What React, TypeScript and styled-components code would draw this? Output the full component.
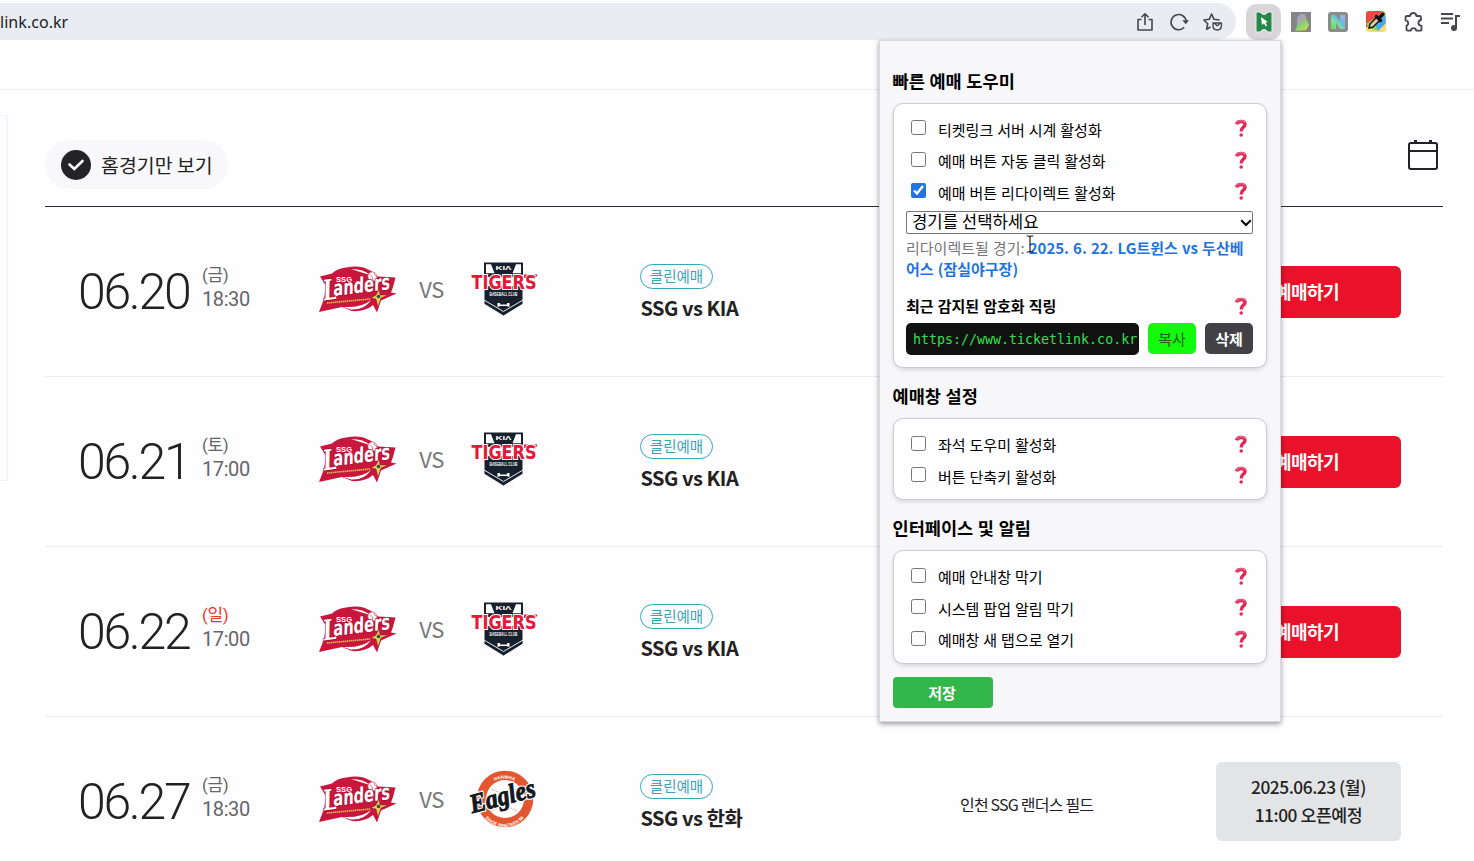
import React from "react"
import styled, { createGlobalStyle } from "styled-components"

const GlobalStyle = createGlobalStyle`
  * {
    box-sizing: border-box;
  }
  body {
    margin: 0;
    overflow: hidden;
    background: #fefdff;
    color: #222;
    font-family: "Noto Sans CJK KR", "Noto Sans", sans-serif;
  }
`
const Page = styled.div`
  position: relative;
  width: 1474px;
  height: 861px;
  overflow: hidden;
`
const BrowserBar = styled.header`
  display: flex;
  align-items: center;
  height: 41px;
  padding: 3px 0 1px;
`
const AddressBar = styled.div`
  display: flex;
  align-items: center;
  width: 1236px;
  height: 37px;
  padding-right: 13px;
  border-radius: 0 19px 19px 0;
  background: #e9edf3;
`
const Url = styled.span`
  flex: 1;
  font: 16px/22px "Noto Sans", sans-serif;
  letter-spacing: 0.05px;
  color: #202124;
`
const AddressIcons = styled.div`
  display: flex;
  gap: 14px;
`
const Extensions = styled.div`
  display: flex;
  align-items: center;
  gap: 17px;
  padding-left: 10px;
`
const ActiveExtension = styled.div`
  display: flex;
  align-items: center;
  justify-content: center;
  width: 35px;
  height: 36px;
  margin-right: -7px;
  border-radius: 10px;
  background: #d8d6d9;
`
const NavStrip = styled.div`
  height: 49px;
  border-bottom: 1px solid #efeef1;
`
const Body = styled.div`
  display: flex;
  align-items: flex-start;
`
const SidePanel = styled.aside`
  width: 8px;
  height: 366px;
  margin-top: 25px;
  border: 1px solid #f3f2f6;
  border-left: 0;
`
const Main = styled.main`
  width: 1398px;
  margin-left: 37px;
`
const Toolbar = styled.div`
  display: flex;
  justify-content: space-between;
  align-items: flex-start;
  height: 117px;
  padding: 50px 4px 0 0;
  border-bottom: 1px solid #2b2a2e;
`
const HomeFilter = styled.div`
  display: flex;
  align-items: center;
  gap: 10px;
  width: 183px;
  height: 49px;
  padding-left: 16px;
  border-radius: 25px;
  background: #f8f7fa;
  font-size: 19.4px;
  letter-spacing: 0.05px;
  white-space: nowrap;
`
const GameRow = styled.section`
  display: flex;
  align-items: center;
  height: 170px;
  padding: 0 42px 0 33px;
  border-bottom: 1px solid #ecebee;
`
const GameDate = styled.div`
  width: 124px;
  font: 300 50px/56px Roboto, sans-serif;
  letter-spacing: -2.3px;
  color: #222;
`
const GameTime = styled.div`
  width: 116px;
  padding-bottom: 8px;
  font: 20px/24px Roboto, "Noto Sans CJK KR", sans-serif;
  letter-spacing: -0.4px;
  color: #666;
`
const DayName = styled.div<{ $holiday?: boolean }>`
  font-size: 17px;
  line-height: 23px;
  color: ${(props) => (props.$holiday ? "#e8392f" : "#666")};
`
const Versus = styled.span`
  width: 72px;
  padding: 0 5px 7px 0;
  text-align: center;
  font: 22px/30px "Noto Sans CJK KR", sans-serif;
  letter-spacing: -0.4px;
  color: #777;
`
const TeamLogo = styled.svg<{ $width: number }>`
  flex: none;
  width: ${(props) => props.$width}px;
  height: 60px;
  overflow: visible;
`
const Match = styled.div`
  width: 320px;
  margin-left: 101px;
  padding-top: 2px;
`
const CleanBadge = styled.span`
  display: block;
  width: 73px;
  height: 25px;
  border: 1px solid #35a7b9;
  border-radius: 13px;
  text-align: center;
  font-size: 14.5px;
  line-height: 22px;
  color: #3ba3b4;
`
const MatchName = styled.div`
  margin-top: 5px;
  padding-left: 0.5px;
  font-size: 20px;
  font-weight: 700;
  line-height: 28px;
  letter-spacing: -0.48px;
`
const Stadium = styled.div`
  flex: 1;
  padding-top: 5px;
  font-size: 16px;
  letter-spacing: -0.8px;
`
const ReserveButton = styled.button`
  width: 185px;
  height: 52px;
  padding: 0 3px 2px 0;
  border: 0;
  border-radius: 6px;
  background: #e9122a;
  font: 700 18px/26px "Noto Sans CJK KR", sans-serif;
  letter-spacing: -0.6px;
  color: #fff;
`
const OpenNotice = styled.div`
  display: flex;
  align-items: center;
  justify-content: center;
  width: 185px;
  height: 79px;
  padding-bottom: 2px;
  border-radius: 6px;
  background: #e2e4e6;
  text-align: center;
  font-size: 17.3px;
  font-weight: 500;
  line-height: 28px;
  letter-spacing: -0.45px;
`

const Popup = styled.div`
  position: absolute;
  top: 40px;
  left: 879px;
  width: 402px;
  height: 682px;
  padding: 26px 13px 0;
  border: 1px solid #dad9dc;
  background: #f7f6f9;
  box-shadow: 0 2px 5px rgba(0, 0, 0, 0.4);
  font-size: 15px;
  color: #000;
`
const SectionTitle = styled.h3`
  margin: 0 0 9px -0.5px;
  font-size: 17.55px;
  font-weight: 700;
  line-height: 27px;
  word-spacing: 0.7px;
`
const Card = styled.div<{ $gap?: number }>`
  margin-bottom: ${(props) => props.$gap ?? 14}px;
  padding: 8px 13px 9px 12px;
  border: 1px solid #cccbd0;
  border-radius: 10px;
  background: #fefdff;
  box-shadow: 0 2px 4px rgba(0, 0, 0, 0.12);
`
const OptionRow = styled.label`
  display: flex;
  align-items: center;
  height: 31.6px;
  padding-right: 4px;
`
const Checkbox = styled.input`
  width: 15px;
  height: 15px;
  margin: 0 12px 0 5px;
  accent-color: #2374e1;
`
const OptionText = styled.span`
  flex: 1;
  padding-top: 4px;
  line-height: 22px;
  word-spacing: 0.6px;
`
const SelectWrap = styled.div`
  position: relative;
  height: 23px;
  margin-top: 4px;
`
const GameSelect = styled.select`
  display: block;
  appearance: none;
  width: 347px;
  height: 23px;
  padding: 0 0 2px 5px;
  border: 1px solid #767676;
  border-radius: 2px;
  background: #fefdff;
  font: 16.7px/19px "Noto Sans CJK KR", sans-serif;
  color: #000;
`
const SelectArrow = styled.svg`
  position: absolute;
  top: 8px;
  right: 1px;
`
const RedirectInfo = styled.p`
  margin: 3px 0 15px;
  line-height: 21px;
  word-spacing: 0.7px;
  color: #777;
  word-break: break-all;
`
const RedirectTarget = styled.b`
  color: #1f74dc;
`
const LinkHeader = styled.div`
  display: flex;
  align-items: center;
  justify-content: space-between;
  height: 24px;
  padding-right: 4px;
  font-weight: 700;
  word-spacing: 0.7px;
`
const LinkRow = styled.div`
  display: flex;
  gap: 9px;
  margin: 5px 0 3.5px;
`
const LinkField = styled.div`
  flex: 1;
  height: 32px;
  padding-left: 7px;
  border-radius: 5px;
  overflow: hidden;
  background: #111;
  font: 13.3px/33px "DejaVu Sans Mono", monospace;
  color: #2fe04a;
`
const SmallButton = styled.button<{ $bg: string; $color: string; $bold?: boolean }>`
  flex: none;
  width: 48px;
  height: 31px;
  padding: 2px 0 0;
  border: 0;
  border-radius: 5px;
  background: ${(props) => props.$bg};
  font: ${(props) => (props.$bold ? 700 : 400)} 15px/22px "Noto Sans CJK KR", sans-serif;
  color: ${(props) => props.$color};
`
const SaveButton = styled.button`
  display: block;
  width: 100px;
  height: 31px;
  padding: 1px 2px 0 0;
  border: 0;
  border-radius: 4px;
  background: #33b74a;
  font: 700 15px/22px "Noto Sans CJK KR", sans-serif;
  color: #fff;
`
const TextCursor = styled.svg`
  position: absolute;
  top: 235px;
  left: 1025px;
`

interface Game {
  date: string
  day: string
  time: string
  opponent: string
  holiday?: boolean
  stadium?: string
  opensAt?: string[]
}

const games: Game[] = [
  { date: "06.20", day: "금", time: "18:30", opponent: "KIA" },
  { date: "06.21", day: "토", time: "17:00", opponent: "KIA" },
  { date: "06.22", day: "일", time: "17:00", opponent: "KIA", holiday: true },
  {
    date: "06.27",
    day: "금",
    time: "18:30",
    opponent: "한화",
    stadium: "인천 SSG 랜더스 필드",
    opensAt: ["2025.06.23 (월)", "11:00 오픈예정"],
  },
]

const LandersLogo = () => (
  <TeamLogo $width={80} viewBox="0 0 80 60">
    <path
      d="M2 14.5 L14 11.5 Q19 6.5 28 5.5 Q42 2.5 50 7.5 Q57 10.5 60 14.5 L77.5 15.5 L75 25 L73 30.5 L78.5 31.5 L63 38.5 L59 50.5 L55 43 Q47 50 34 49 L24 45 L1 50 L6 37 L8 24Z"
      fill="#c9163c"
    />
    <path d="M33 7 Q46 7 52 13 Q42 10 33 7Z M25 45 Q44 46 53 38 Q47 48 33 47.5Z" fill="#fff" />
    <circle cx="54.5" cy="14.5" r="4.5" fill="#fff" stroke="#d7828e" strokeWidth=".7" />
    <path d="M52 12.5q3 2 3 6M56 10.5q0 3 3 4" fill="none" stroke="#c9163c" strokeWidth=".6" />
    <text x="18" y="20" fill="#fff" fontFamily="Liberation Sans" fontWeight="700" fontSize="7.5" textLength="16">
      SSG
    </text>
    <g
      transform="rotate(-7 8 37) skewX(-8)"
      fill="#fff"
      stroke="#a10f33"
      strokeWidth="1.4"
      paintOrder="stroke"
      fontWeight="700"
    >
      <text x="10" y="38" fontFamily="DejaVu Serif" fontSize="28" textLength="14" lengthAdjust="spacingAndGlyphs">
        L
      </text>
      <text x="20.5" y="35" fontFamily="DejaVu Sans" fontSize="21" textLength="57" lengthAdjust="spacingAndGlyphs">
        anders
      </text>
    </g>
    <path d="M9 41 L52 37" stroke="#e3b44d" strokeWidth="1.6" strokeDasharray="1.5 .5" />
    <path d="M61 27 L62 33 L70 33 L63 36 L60 45 L58 37 L53 36 L58 33Z" fill="#e9cf5b" stroke="#8c1733" strokeWidth=".5" />
    <circle cx="60.5" cy="34.5" r="1.8" fill="#26583c" />
  </TeamLogo>
)

const TigersLogo = () => (
  <TeamLogo $width={69} viewBox="0 0 69 60">
    <path d="M14 .4 H53 V15 H14Z" fill="#17212d" />
    <path d="M16 2.2 h5 l3.5 9 h-8.5z M51 2.2 h-5 l-3.5 9 h8.5z" fill="#fff" />
    <path d="M14.5 24 H52.5 V40 L33.5 51 L14.5 40Z" fill="#17212d" />
    <path d="M14 38 L33.5 49.5 L53 38 V42 L33.5 54 L14 42Z" fill="#17212d" stroke="#fff" strokeWidth=".9" />
    <path d="M27.5 45 v-4 h2.5 v1.5 h7 v-1.5 h2.5 v4 l-3 -1 h-6z" fill="#fff" />
    <text x="25.5" y="8" fill="#fff" fontFamily="Liberation Sans" fontWeight="700" fontSize="5.5" textLength="16" lengthAdjust="spacingAndGlyphs">
      KIΛ
    </text>
    {/* wide serifs on the outer ends of the wordmark */}
    <path d="M.2 12.6 H16 V16 H2.4Z M67.6 12.6 H54 V16 H65.6Z" fill="#e31937" />
    <text
      x="1.5"
      y="26.6"
      fill="#e31937"
      stroke="#fff"
      strokeWidth="2.2"
      paintOrder="stroke"
      fontFamily="DejaVu Sans"
      fontWeight="700"
      fontSize="19"
      textLength="65"
      lengthAdjust="spacingAndGlyphs"
    >
      TIGERS
    </text>
    <text x="19.5" y="33.5" fill="#fff" fontFamily="Liberation Sans" fontWeight="700" fontSize="4.5" textLength="28" lengthAdjust="spacingAndGlyphs">
      BASEBALL CLUB
    </text>
  </TeamLogo>
)

const EaglesLogo = () => (
  <TeamLogo $width={69} viewBox="0.5 3 69 60">
    <circle cx="35.5" cy="30" r="28.3" fill="#e2572f" />
    <circle cx="35.5" cy="30" r="19" fill="#fff" />
    <path d="M22 20 Q34 27 48 20 M22 42 Q34 34 48 42" fill="none" stroke="#efb49b" strokeWidth="1.4" strokeDasharray="1.5 1" />
    <path id="eaglesTop" d="M14 25 A22 22 0 0 1 56 25" fill="none" />
    <path id="eaglesBottom" d="M10 33 A25 25 0 0 0 60 33" fill="none" />
    <g fill="#fff" fontFamily="Liberation Sans" fontWeight="700" fontSize="4.5">
      <text>
        <textPath href="#eaglesTop" startOffset="50%" textAnchor="middle">
          HANWHA
        </textPath>
      </text>
      <text>
        <textPath href="#eaglesBottom" startOffset="50%" textAnchor="middle">
          SINCE NINETEEN 86
        </textPath>
      </text>
    </g>
    <g transform="rotate(-15 4 45)" fontFamily="Liberation Serif" fontStyle="italic" fontWeight="700" fontSize="27">
      <text x="3" y="44" fill="#fff" stroke="#fff" strokeWidth="3.2" textLength="67" lengthAdjust="spacingAndGlyphs" aria-hidden="true">
        Eagles
      </text>
      <text x="3" y="44" fill="#111820" stroke="#111820" strokeWidth=".9" textLength="67" lengthAdjust="spacingAndGlyphs">
        Eagles
      </text>
    </g>
  </TeamLogo>
)

const HelpMark = () => (
  <svg width="15" height="19" viewBox="0 -1 15 19">
    <path d="M2.6 5.4 Q3.2 2.5 7 2.5 Q11 2.5 11 5.5 Q11 7.3 8.8 8.6 Q7.3 9.6 7.3 12.4" fill="none" stroke="#dc2b55" strokeWidth="3.5" />
    <path d="M2.5 4.4 Q3.6 1.6 7.2 1.6 Q10.4 1.6 11.2 4" fill="none" stroke="#f0668a" strokeWidth="1.1" />
    <circle cx="7.2" cy="16" r="1.8" fill="#dc2b55" />
  </svg>
)

const Option = ({ label, checked }: { label: string; checked?: boolean }) => (
  <OptionRow>
    <Checkbox type="checkbox" defaultChecked={checked} />
    <OptionText>{label}</OptionText>
    <HelpMark />
  </OptionRow>
)

const BrowserHeader = () => (
  <BrowserBar>
    <AddressBar>
      <Url>link.co.kr</Url>
      <AddressIcons>
        <svg width="20" height="20" viewBox="0 0 20 20" fill="none" stroke="#47474b" strokeWidth="1.6">
          <path d="M6.5 7.5 H3 V18 H17 V7.5 H13.5 M10 13 V2 M6.5 5.3 L10 1.8 L13.5 5.3" strokeLinejoin="round" />
        </svg>
        <svg width="20" height="20" viewBox="0 0 20 20" fill="none" stroke="#47474b" strokeWidth="1.6">
          <path d="M15.2 15.3 A7.6 7.6 0 1 1 17.2 9.5" />
          <path d="M13.3 8.3 H20 L16.8 12.2Z" fill="#47474b" stroke="none" />
        </svg>
        <svg width="20" height="20" viewBox="0 0 20 20" fill="none" stroke="#47474b" strokeWidth="1.6" strokeLinejoin="round">
          <path d="M7.5 15 L3.6 17.2 L4.7 11.8 L.9 8 L6.2 7.3 L8.6 2 L11 7.3 L16.6 8" />
          <path d="M10 11 H18.4 V13.5 Q18.4 18 14.2 18 Q10 18 10 13.5Z M11 11 L14.2 13.8 L17.5 11" strokeWidth="1.4" />
        </svg>
      </AddressIcons>
    </AddressBar>
    <Extensions>
      <ActiveExtension>
        <svg width="18" height="22" viewBox="0 0 18 22">
          <path d="M1 1 H5 Q9 6 13 1 H17 V21 H13 Q9 16 5 21 H1Z" fill="#27864a" stroke="#e5f5ec" />
          <path d="M6 6 L7 14 L9 12.3 L10.6 15.5 L12 14.7 L10.5 11.5 L12.8 11Z" fill="#fff" />
        </svg>
      </ActiveExtension>
      <svg width="20" height="20" viewBox="0 0 20 20">
        <defs>
          <linearGradient id="spectrum" x1="0" y1="1" x2="1" y2="0">
            <stop offset="0" stopColor="#5be04b" />
            <stop offset=".35" stopColor="#7fe090" />
            <stop offset=".65" stopColor="#67b7f0" />
            <stop offset="1" stopColor="#b8b0d8" />
          </linearGradient>
          <linearGradient id="feather" x1="0" y1="0" x2=".6" y2="1">
            <stop offset="0" stopColor="#63aee0" />
            <stop offset=".4" stopColor="#b79fae" />
            <stop offset=".65" stopColor="#7fcf7c" />
            <stop offset="1" stopColor="#c5e04a" />
          </linearGradient>
        </defs>
        <path d="M0 0H20V20H0Z" fill="#858585" />
        <path d="M6 6 L9 2 L14 2 L15 6 L18 13 L15 18 L4 19 L6 14Z" fill="url(#feather)" />
      </svg>
      <svg width="20" height="20" viewBox="0 0 20 20">
        <rect width="20" height="20" rx="3" fill="#8b8b8b" />
        <path d="M3 17 V4 Q6 1 9 5 L12 9 V3 H17 V17 H12 L8 11 V17Z" fill="url(#spectrum)" />
      </svg>
      <svg width="22" height="21" viewBox="0 0 22 21">
        <rect x="1" width="20" height="21" rx="3" fill="#f4de74" />
        <path d="M1 3 Q1 0 4 0 H18 L1 17Z" fill="#ef4646" />
        <path d="M20 3 L21 12 L13 20 L8 14Z" fill="#48a9ec" />
        <path d="M1 13 L8 8 L13 20 L6 18Z" fill="#8bd45c" />
        <path d="M4 17 L5 13 L12 6 L15 9 L8 16Z" fill="#e6cf9e" stroke="#151515" strokeWidth="1.4" />
        <path d="M11.5 5.5 L15.5 9.5 M13.5 7.5 L18 3" stroke="#111" strokeWidth="3.4" strokeLinecap="round" />
      </svg>
      <svg width="20" height="22" viewBox="1 0 20 22" fill="none" stroke="#47474b" strokeWidth="1.8" strokeLinejoin="round">
        <path d="M4 5 H7 Q7.6 2 10.3 2 Q13 2 13.5 5 H16.5 Q18 5 18 6.5 V9 Q15.4 9.6 15.4 12 Q15.4 14.4 18.5 15 V18 Q18.5 19.7 17 19.7 H13.2 Q12.8 17.2 10.5 17.2 Q8.2 17.2 7.8 19.7 H5 Q3.5 19.7 3.5 18 V14.5 Q5.4 14 5.2 11.8 Q5 9.8 2.5 9.3 V6.5 Q2.5 5 4 5Z" />
      </svg>
      <svg width="20" height="20" viewBox="0 0 20 20" fill="none" stroke="#47474b" strokeWidth="2">
        <path d="M0 2 H12 M0 6.5 H12 M0 11 H8 M19 4 H15 V16" />
        <circle cx="13" cy="16" r="3" fill="#47474b" stroke="none" />
      </svg>
    </Extensions>
  </BrowserBar>
)

const Game = ({ game }: { game: Game }) => (
  <GameRow>
    <GameDate>{game.date}</GameDate>
    <GameTime>
      <DayName $holiday={game.holiday}>({game.day})</DayName>
      {game.time}
    </GameTime>
    <LandersLogo />
    <Versus>VS</Versus>
    {game.opponent === "KIA" ? <TigersLogo /> : <EaglesLogo />}
    <Match>
      <CleanBadge>클린예매</CleanBadge>
      <MatchName>SSG vs {game.opponent}</MatchName>
    </Match>
    <Stadium>{game.stadium}</Stadium>
    {game.opensAt ? (
      <OpenNotice>
        {game.opensAt[0]}
        <br />
        {game.opensAt[1]}
      </OpenNotice>
    ) : (
      <ReserveButton>예매하기</ReserveButton>
    )}
  </GameRow>
)

const HelperPopup = () => (
  <Popup>
    <SectionTitle>빠른 예매 도우미</SectionTitle>
    <Card>
      <Option label="티켓링크 서버 시계 활성화" />
      <Option label="예매 버튼 자동 클릭 활성화" />
      <Option label="예매 버튼 리다이렉트 활성화" checked />
      <SelectWrap>
        <GameSelect>
          <option>경기를 선택하세요</option>
        </GameSelect>
        <SelectArrow width="12" height="8" viewBox="0 0 12 8">
          <path d="M1.2 1.2 L6 6 L10.8 1.2" fill="none" stroke="#000" strokeWidth="2" />
        </SelectArrow>
      </SelectWrap>
      <RedirectInfo>
        리다이렉트될 경기: <RedirectTarget>2025. 6. 22. LG트윈스 vs 두산베어스 (잠실야구장)</RedirectTarget>
      </RedirectInfo>
      <LinkHeader>
        최근 감지된 암호화 직링
        <HelpMark />
      </LinkHeader>
      <LinkRow>
        <LinkField>https://www.ticketlink.co.kr</LinkField>
        <SmallButton $bg="#12fb0c" $color="#245c22">
          복사
        </SmallButton>
        <SmallButton $bg="#424145" $color="#fff" $bold>
          삭제
        </SmallButton>
      </LinkRow>
    </Card>
    <SectionTitle>예매창 설정</SectionTitle>
    <Card>
      <Option label="좌석 도우미 활성화" />
      <Option label="버튼 단축키 활성화" />
    </Card>
    <SectionTitle>인터페이스 및 알림</SectionTitle>
    <Card $gap={12.5}>
      <Option label="예매 안내창 막기" />
      <Option label="시스템 팝업 알림 막기" />
      <Option label="예매창 새 탭으로 열기" />
    </Card>
    <SaveButton>저장</SaveButton>
  </Popup>
)

const App = () => (
  <Page>
    <GlobalStyle />
    <BrowserHeader />
    <NavStrip />
    <Body>
      <SidePanel />
      <Main>
        <Toolbar>
          <HomeFilter>
            <svg width="30" height="30" viewBox="0 0 30 30">
              <circle cx="15" cy="15" r="15" fill="#242328" />
              <path d="M8.5 14.5 L13.3 19 L21.5 11" fill="none" stroke="#fff" strokeWidth="2.6" strokeLinecap="round" />
            </svg>
            홈경기만 보기
          </HomeFilter>
          <svg width="32" height="32" viewBox="0 0 32 32" fill="none" stroke="#222126" strokeWidth="2">
            <rect x="2" y="3" width="28" height="26" rx="2" />
            <path d="M2 11 H30" />
            <path d="M8.5 0 V3 M23.5 0 V3" strokeWidth="3" />
          </svg>
        </Toolbar>
        {games.map((game) => (
          <Game key={game.date} game={game} />
        ))}
      </Main>
    </Body>
    <HelperPopup />
    <TextCursor width="10" height="18" viewBox="0 0 10 18">
      <path d="M1.5 1 H4 L5 2 L6 1 H8.5 M5 2 V16 M1.5 17 H4 L5 16 L6 17 H8.5" fill="none" stroke="#222" strokeWidth="1.2" />
    </TextCursor>
  </Page>
)

export default App
